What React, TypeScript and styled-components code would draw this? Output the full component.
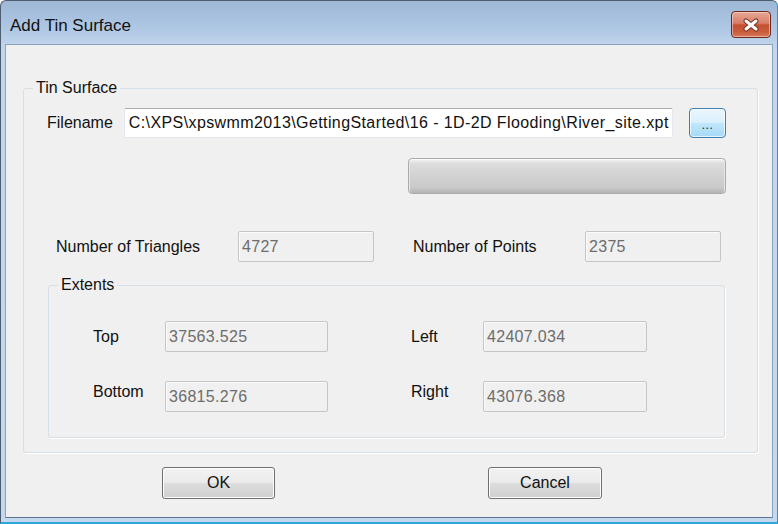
import React from 'react';
import styled, { createGlobalStyle } from 'styled-components';

const Global = createGlobalStyle`
  html, body { margin: 0; padding: 0; background: #ffffff; }
  body { font-family: "Liberation Sans", Arial, sans-serif; }
  * { box-sizing: border-box; }
`;

const Window = styled.div`
  width: 778px;
  height: 524px;
  display: flex;
  flex-direction: column;
  background: linear-gradient(180deg, #9db7d5 0px, #b1c9e5 30px, #c1d5ec 44px, #c4d8ee 100%);
  border: 1px solid #4d5d70;
  border-bottom: 2px solid #2fa6da;
  border-right-color: #3f8fbf;
  border-radius: 6px 6px 0 0;
  padding: 0 4px 4px 4px;
`;

const TitleBar = styled.div`
  height: 43px;
  display: flex;
  align-items: center;
  justify-content: space-between;
  padding: 6px 2px 0 5px;
`;

const Title = styled.span`
  font-size: 17px;
  color: #111;
`;

const CloseButton = styled.div`
  width: 40px;
  height: 27px;
  margin-top: -2px;
  border: 1px solid #6b2a1f;
  border-radius: 4px;
  background: linear-gradient(180deg, #e7a895 0%, #d77e68 45%, #c4502f 52%, #c95d3f 80%, #d9795c 100%);
  box-shadow: inset 0 0 0 1px rgba(255, 220, 210, 0.55);
  display: flex;
  align-items: center;
  justify-content: center;
`;

const Client = styled.div`
  flex: 1;
  background: #f0f0f0;
  border: 1px solid #8aa2bc;
  border-bottom-color: #5c7590;
  padding: 34px 14px 0 17px;
  display: flex;
  flex-direction: column;
`;

const Group = styled.fieldset<{ $inset?: number }>`
  margin: 0 ${(p) => p.$inset ?? 0}px;
  padding: 0;
  border: 1px solid #d5dfe5;
  border-radius: 3px;
  box-shadow: 1px 1px 0 #ffffff;
  min-width: 0;
`;

const Legend = styled.legend`
  margin-left: 9px;
  padding: 0 3px;
  font-size: 16px;
  line-height: 18px;
  color: #111;
`;

const GroupBody = styled.div<{ $pad: string }>`
  padding: ${(p) => p.$pad};
  display: flex;
  flex-direction: column;
`;

const Row = styled.div<{ $indent?: number; $top?: number }>`
  display: flex;
  align-items: center;
  padding-left: ${(p) => p.$indent ?? 0}px;
  margin-top: ${(p) => p.$top ?? 0}px;
`;

const Label = styled.span<{ $w?: number; $raise?: number }>`
  font-size: 16px;
  color: #111;
  white-space: nowrap;
  width: ${(p) => (p.$w ? `${p.$w}px` : 'auto')};
  flex: none;
  padding-bottom: ${(p) => p.$raise ?? 0}px;
`;

const FileInput = styled.div`
  width: 550px;
  height: 30px;
  margin-left: 11px;
  background: #ffffff;
  border: 1px solid #e2e8ee;
  border-top-color: #abadb3;
  border-radius: 2px;
  font-size: 16px;
  letter-spacing: 0.4px;
  color: #111;
  display: flex;
  align-items: center;
  padding-left: 4px;
  white-space: nowrap;
  overflow: hidden;
`;

const BrowseButton = styled.div`
  width: 37px;
  height: 30px;
  margin-left: 16px;
  border: 1px solid #3c7fb1;
  border-radius: 4px;
  background: linear-gradient(180deg, #eaf6fd 0%, #d9f0fc 48%, #bee6fd 52%, #a7d9f5 100%);
  box-shadow: inset 0 0 0 1px rgba(255, 255, 255, 0.7);
  font-size: 12px;
  color: #222;
  display: flex;
  align-items: flex-end;
  justify-content: center;
  padding-bottom: 5px;
  letter-spacing: 0.5px;
`;

const Progress = styled.div`
  align-self: flex-end;
  width: 318px;
  height: 36px;
  margin-top: 20px;
  border: 1px solid #aaaaaa;
  border-radius: 4px;
  background: linear-gradient(180deg, #f4f4f4 0%, #dcdcdc 14%, #d2d2d2 50%, #c9c9c9 84%, #b4b4b4 100%);
  box-shadow: inset 0 1px 0 #fafafa, inset 1px 0 0 #e6e6e6, inset -1px 0 0 #e6e6e6;
`;

const ReadBox = styled.div<{ $w: number }>`
  width: ${(p) => p.$w}px;
  height: 31px;
  flex: none;
  background: #f0f0f0;
  border: 1px solid #c5c5c5;
  border-radius: 2px;
  box-shadow: inset 1px 1px 0 #fbfbfb;
  font-size: 16px;
  color: #6d6d6d;
  letter-spacing: 0.3px;
  display: flex;
  align-items: center;
  padding-left: 3px;
`;

const Spacer = styled.div<{ $w: number }>`
  width: ${(p) => p.$w}px;
  flex: none;
`;

const ButtonBar = styled.div`
  display: flex;
  gap: 213px;
  padding-left: 139px;
  margin-top: 14px;
`;

const PushButton = styled.div<{ $w: number }>`
  width: ${(p) => p.$w}px;
  height: 32px;
  border: 1px solid #707070;
  border-radius: 3px;
  background: linear-gradient(180deg, #f2f2f2 0%, #ebebeb 48%, #dddddd 52%, #cfcfcf 100%);
  box-shadow: inset 0 0 0 1px #fcfcfc;
  font-size: 16px;
  color: #111;
  display: flex;
  align-items: center;
  justify-content: center;
`;

const CloseGlyph = () => (
  <svg width="18" height="14" viewBox="0 0 18 14">
    <path d="M4 3 L14 11 M14 3 L4 11" stroke="#7a3322" strokeWidth="5" strokeLinecap="round" />
    <path d="M4 3 L14 11 M14 3 L4 11" stroke="#ffffff" strokeWidth="3" strokeLinecap="round" />
  </svg>
);

export default function App() {
  return (
    <>
      <Global />
      <Window>
        <TitleBar>
          <Title>Add Tin Surface</Title>
          <CloseButton>
            <CloseGlyph />
          </CloseButton>
        </TitleBar>
        <Client>
          <Group>
            <Legend>Tin Surface</Legend>
            <GroupBody $pad="11px 31px 14px 23px">
              <Row>
                <Label>Filename</Label>
                <FileInput>C:\XPS\xpswmm2013\GettingStarted\16 - 1D-2D Flooding\River_site.xpt</FileInput>
                <BrowseButton>...</BrowseButton>
              </Row>
              <Progress />
              <Row $indent={9} $top={37}>
                <Label $w={182}>Number of Triangles</Label>
                <ReadBox $w={136}>4727</ReadBox>
                <Spacer $w={39} />
                <Label $w={172}>Number of Points</Label>
                <ReadBox $w={136}>2375</ReadBox>
              </Row>
              <Group $inset={1} style={{ marginTop: 14 }}>
                <Legend>Extents</Legend>
                <GroupBody $pad="27px 0 25px 44px">
                  <Row>
                    <Label $w={72}>Top</Label>
                    <ReadBox $w={163}>37563.525</ReadBox>
                    <Spacer $w={83} />
                    <Label $w={72}>Left</Label>
                    <ReadBox $w={164}>42407.034</ReadBox>
                  </Row>
                  <Row $top={29}>
                    <Label $w={72} $raise={9}>Bottom</Label>
                    <ReadBox $w={163}>36815.276</ReadBox>
                    <Spacer $w={83} />
                    <Label $w={72} $raise={9}>Right</Label>
                    <ReadBox $w={164}>43076.368</ReadBox>
                  </Row>
                </GroupBody>
              </Group>
            </GroupBody>
          </Group>
          <ButtonBar>
            <PushButton $w={113}>OK</PushButton>
            <PushButton $w={114}>Cancel</PushButton>
          </ButtonBar>
        </Client>
      </Window>
    </>
  );
}
